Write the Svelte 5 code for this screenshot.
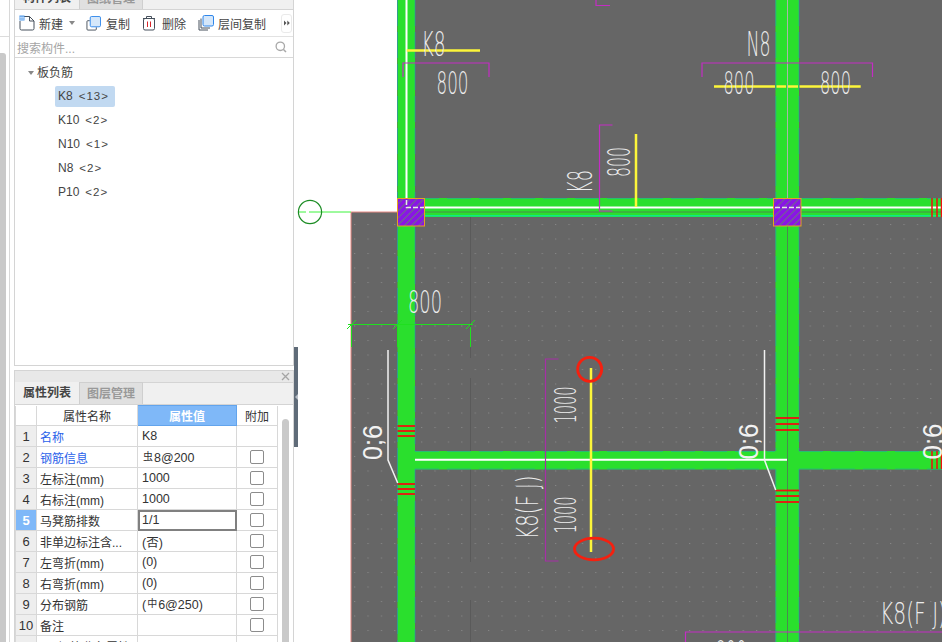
<script>
  const items = [
    { name: 'K8', count: '<13>', active: true },
    { name: 'K10', count: '<2>' },
    { name: 'N10', count: '<1>' },
    { name: 'N8', count: '<2>' },
    { name: 'P10', count: '<2>' }
  ];

  const rows = [
    { name: '名称', value: 'K8', link: true, nocheck: true },
    { name: '钢筋信息', bar: '虫', value: '8@200', link: true },
    { name: '左标注(mm)', value: '1000' },
    { name: '右标注(mm)', value: '1000' },
    { name: '马凳筋排数', value: '1/1', current: true },
    { name: '非单边标注含...', value: '(否)' },
    { name: '左弯折(mm)', value: '(0)' },
    { name: '右弯折(mm)', value: '(0)' },
    { name: '分布钢筋', pre: '(', bar: '中', value: '6@250)' },
    { name: '备注', value: '' }
  ];

  // CAD labels: x,y is the baseline start, len the drawn length along the text
  const labels = [
    { t: 'K8', x: 421.5, y: 56, size: 33, len: 24 },
    { t: '800', x: 436.5, y: 94, size: 32, len: 32 },
    { t: 'N8', x: 746.5, y: 56, size: 33, len: 24 },
    { t: '800', x: 723.5, y: 94, size: 32, len: 31 },
    { t: '800', x: 820, y: 94, size: 32, len: 31 },
    { t: '800', x: 408, y: 313, size: 32, len: 34 },
    { t: 'K8', x: 592, y: 193, size: 33, len: 23, rot: -90 },
    { t: '800', x: 630, y: 177, size: 32, len: 30, rot: -90 },
    { t: '1000', x: 576, y: 423.5, size: 31, len: 37, rot: -90 },
    { t: '1000', x: 576, y: 533.5, size: 31, len: 37, rot: -90 },
    { t: 'K8(F J)', x: 538, y: 539.5, size: 31, len: 64, rot: -90 },
    { t: '0;6', x: 382, y: 460, size: 28, len: 35, rot: -90, bold: true },
    { t: '0;6', x: 758, y: 459.5, size: 28, len: 36, rot: -90, bold: true },
    { t: '0;6', x: 942, y: 459.5, size: 28, len: 36, rot: -90, bold: true },
    { t: 'K8(F J)', x: 880, y: 623.5, size: 30, len: 66 },
    { t: '800', x: 715.5, y: 663, size: 32, len: 31 }
  ];

  const magenta = [
    'M596 0V5.5H610',
    'M403 77V63H489V77',
    'M612.5 125H599.5V211H612.5',
    'M702 77V63H872.5V77',
    'M685.5 642V632H942'
  ];

  const redBars = [426, 431, 436, 484, 489, 494];
  const redBars2 = [418, 424, 430, 490.5, 496, 502];
</script>

<div class="app">
  <div class="rail">
    <div class="rail-inner">
      <div class="rail-top"></div>
      <div class="rail-thumb"></div>
    </div>
  </div>

  <div class="panels">
    <section class="panel list">
      <div class="tabs clipped">
        <span class="tab on">构件列表</span>
        <span class="tab">图纸管理</span>
      </div>

      <div class="toolbar">
        <span class="tool new">
          <svg width="16" height="16" viewBox="0 0 16 16">
            <path d="M5 1.5H10.5L15 6V13.5Q15 15 13.5 15H2.5Q1 15 1 13.5V6" fill="#fff" stroke="#46505c" />
            <path d="M10.5 1.5V6H15" fill="none" stroke="#46505c" />
            <rect x="0.5" y="0.5" width="5" height="5" fill="#3f8fe8" />
            <path d="M0.5 2.5H5.5M0.5 4H5.5M2 .5V5.5M4 .5V5.5" stroke="#cfe4fb" stroke-width=".7" />
          </svg>
          新建
          <i class="caret"></i>
        </span>
        <span class="tool copy">
          <svg width="15" height="15" viewBox="0 0 16 16">
            <path d="M4 5H2Q1 5 1 6V14Q1 15 2 15H10Q11 15 11 14V12" fill="none" stroke="#46505c" />
            <rect x="4.5" y="0.5" width="11" height="11" rx="1.5" fill="#d5e7fa" stroke="#2f86ea" />
          </svg>
          复制
        </span>
        <span class="tool del">
          <svg width="14" height="16" viewBox="0 0 14 16">
            <path d="M1 3.5H13M4.5 3.5V1.5H9.5V3.5" fill="none" stroke="#46505c" />
            <rect x="1.5" y="3.5" width="11" height="11.5" rx="1.5" fill="none" stroke="#46505c" />
            <path d="M5.5 6.5V12M8.5 6.5V12" stroke="#d8262c" />
          </svg>
          删除
        </span>
        <span class="tool layer">
          <svg width="16" height="16" viewBox="0 0 16 16">
            <path d="M1 5V15H10M3 3.5V13H12" fill="none" stroke="#46505c" />
            <rect x="5" y="0.5" width="10.5" height="10.5" rx="1.5" fill="#d5e7fa" stroke="#2f86ea" />
          </svg>
          层间复制
        </span>
        <span class="more">
          <svg width="6" height="6" viewBox="0 0 6 6"><path d="M0 0.5L2.5 3L0 5.500ZM3.300 0.5L5.800 3L3.300 5.500Z" fill="#555" /></svg>
        </span>
      </div>

      <div class="search">
        <span>搜索构件...</span>
        <svg width="12" height="12" viewBox="0 0 12 12">
          <circle cx="5.300" cy="5.300" r="4.200" fill="none" stroke="#a8a8a8" stroke-width="1.300" />
          <path d="M8.500 8.500L11 11" stroke="#a8a8a8" stroke-width="1.500" />
        </svg>
      </div>

      <div class="tree">
        <div class="group"><i class="caret"></i>板负筋</div>
        {#each items as item}
          <div class="leaf">
            <span class:active={item.active}>{item.name}<em>{item.count}</em></span>
          </div>
        {/each}
      </div>
    </section>

    <section class="panel props">
      <div class="titlebar">
        <svg width="9" height="9" viewBox="0 0 9 9"><path d="M1 1L8 8M8 1L1 8" stroke="#a5a5a5" stroke-width="1.300" /></svg>
      </div>
      <div class="tabs short">
        <span class="tab on">属性列表</span>
        <span class="tab">图层管理</span>
      </div>
      <div class="grid-wrap">
        <table>
          <thead>
            <tr>
              <th class="idx plain"></th>
              <th class="col-name">属性名称</th>
              <th class="col-val">属性值</th>
              <th class="col-add">附加</th>
            </tr>
          </thead>
          <tbody>
            {#each rows as row, i}
              <tr>
                <td class="idx" class:hot={row.current}>{i + 1}</td>
                <td class:link={row.link}>{row.name}</td>
                <td class="val" class:editing={row.current}>
                  {#if row.pre}{row.pre}{/if}{#if row.bar}<span class="bar">{row.bar}</span>{/if}{row.value}
                </td>
                <td class="chk">
                  {#if !row.nocheck}<span class="box"></span>{/if}
                </td>
              </tr>
            {/each}
            <tr>
              <td class="idx"></td>
              <td><span class="box small"></span>钢筋业务属性</td>
              <td></td>
              <td></td>
            </tr>
          </tbody>
        </table>
        <div class="vscroll"><div class="vthumb"></div></div>
      </div>
    </section>
  </div>

  <div class="canvas">
    <svg class="drawing" width="648" height="642" viewBox="294 0 648 642">
      <defs>
        <pattern id="dots" width="13.4" height="14.500" patternUnits="userSpaceOnUse" x="354" y="224">
          <rect x="0" y="0" width="1.200" height="1" fill="#868686" />
        </pattern>
        <pattern id="hatch" width="5" height="5" patternUnits="userSpaceOnUse" patternTransform="rotate(-45)">
          <rect width="5" height="5" fill="#8a14e6" />
          <rect width="5" height="1.100" fill="#6f6a8a" />
        </pattern>
      </defs>

      <rect x="294" y="0" width="648" height="642" fill="#fff" />
      <path d="M397 0H942V642H351V212H397Z" fill="#666" />
      <rect x="351" y="217" width="591" height="425" fill="url(#dots)" />
      <path d="M351 642V212H397" fill="none" stroke="#e98a84" />
      <path d="M470.500 217V358M470.500 378V562M470.500 600V642" stroke="#5a5a5a" />

      <!-- walls -->
      <rect x="397.500" y="0" width="17.500" height="642" fill="#2adf2d" />
      <rect x="775.500" y="0" width="23.500" height="642" fill="#2adf2d" />
      <rect x="415" y="198" width="527" height="19" fill="#2adf2d" />
      <rect x="415" y="451" width="527" height="18.500" fill="#2adf2d" />
      <path d="M415 215.800H942" stroke="#12e58a" stroke-width="1.500" />
      <path d="M415 198.500H942M415 451.500H775M799 451.500H942M415 469H775M799 469H942" stroke="#1f9ac0" stroke-width=".8" stroke-opacity=".6" stroke-dasharray="24 8" />
      <path d="M397.500 0V642M415 0V198M415 226V451M415 469V642M775.800 0V451M799 0V451M775.800 469V642M799 469V642" stroke="#1f9ac0" stroke-width=".8" stroke-opacity=".7" stroke-dasharray="26 6" />
      <path d="M415 212H942" stroke="#4a8a50" />
      <path d="M787.500 226V642" stroke="#4a8a50" />
      <path d="M787.500 0V198" stroke="#aab4aa" />
      <path d="M406.500 0V198M415 207.500H942M415 459.800H787" stroke="#fff" stroke-width="2" />

      <!-- reinforcement marks -->
      {#each redBars as y}
        <path d="M397.500 {y}H415" stroke="#f01010" stroke-width="1.800" />
      {/each}
      {#each redBars2 as y}
        <path d="M775.500 {y}H799" stroke="#f01010" stroke-width="1.800" />
      {/each}
      <path d="M932 198V217M937 198V217M941.500 198V217M932 451V469M937 451V469M941.500 451V469" stroke="#f01010" stroke-width="1.500" />

      <!-- columns -->
      <rect x="397.500" y="198.500" width="27" height="27.500" fill="url(#hatch)" stroke="#e8a020" />
      <rect x="773.500" y="198.500" width="27.500" height="27.500" fill="url(#hatch)" stroke="#e8a020" />
      <path d="M406.500 200V207.500H424" fill="none" stroke="#e8e8e8" stroke-width="1.500" stroke-dasharray="5 2" />
      <path d="M775 207.500H800" stroke="#e8e8e8" stroke-width="1.500" stroke-dasharray="5 2" />

      <!-- axis -->
      <path d="M298 212H351" stroke="#3cf43c" stroke-dasharray="8 3 60 0" />
      <circle cx="310" cy="212" r="11.600" fill="none" stroke="#1c8c24" stroke-width="1.200" />

      <!-- dimension -->
      <g stroke="#1fe01f" fill="none">
        <path d="M348 324.500H473" />
        <path d="M347 329L356 320M393 329L402 320M466 329L475 320" />
        <path d="M351.500 325V347M397.500 325V347M470.500 327V347" />
      </g>

      <!-- leaders -->
      <path d="M388 350V460L397.700 483M764.500 350V460L775.700 490" fill="none" stroke="#f2f2f2" stroke-width="1.500" />

      <!-- magenta brackets -->
      {#each magenta as d}
        <path {d} fill="none" stroke="#c42cc4" stroke-width="1.200" />
      {/each}
      <path d="M558.500 359H545.500V561H558.500" fill="none" stroke="#a62fa6" stroke-width="1.200" />

      <!-- yellow bars -->
      <path d="M406.700 50.500H480M636 134V207M591 368V552" stroke="#fdf63a" stroke-width="2.500" fill="none" />
      <path d="M714 86.500H775M776.500 86.500H786M788 86.500H798M799.500 86.500H860.700" stroke="#fdf63a" stroke-width="2.500" />

      {#each labels as l}
        <text
          class="cad"
          class:solid={l.bold}
          transform="translate({l.x} {l.y}) rotate({l.rot || 0})"
          font-size={l.size}
          textLength={l.len}
          lengthAdjust="spacingAndGlyphs">{l.t}</text>
      {/each}

      <!-- red markers -->
      <circle cx="589.700" cy="369.300" r="12" fill="none" stroke="#f5200f" stroke-width="2.800" />
      <ellipse cx="594" cy="549" rx="19.500" ry="10.800" fill="none" stroke="#f5200f" stroke-width="2.800" />
    </svg>

    <div class="splitter"><i></i></div>
  </div>
</div>

<style>
  :global(body) {
    margin: 0;
    background: #fff;
  }

  .app {
    display: flex;
    width: 942px;
    height: 642px;
    overflow: hidden;
    font-family: "Liberation Sans", "Noto Sans CJK SC", sans-serif;
    font-size: 12px;
    color: #333;
  }

  .rail {
    width: 14px;
    flex: none;
    background: #fff;
  }

  .rail-inner {
    display: flex;
    flex-direction: column;
    width: 9px;
    height: 100%;
    border-right: 1px solid #d8d8d8;
  }

  .rail-top {
    height: 36px;
    border-bottom: 1px solid #dcdcdc;
  }

  .rail-thumb {
    flex: 1;
    width: 6px;
    margin-top: 16px;
    background: #c9c9c9;
    border-top-right-radius: 3px;
  }

  .panels {
    width: 280px;
    flex: none;
    display: flex;
    flex-direction: column;
    gap: 4px;
  }

  .panel {
    border: 1px solid #d4d4d4;
    border-top: 0;
    background: #fff;
    display: flex;
    flex-direction: column;
  }

  .list {
    height: 365px;
    flex: none;
  }

  .props {
    flex: 1;
    min-height: 0;
    border-bottom: 0;
    border-top: 1px solid #d4d4d4;
  }

  .tabs {
    display: flex;
    flex: none;
    height: 22px;
    background: #f0f0f0;
    border-bottom: 1px solid #d4d4d4;
    align-items: flex-end;
  }

  .tabs.short {
    height: 21px;
  }

  .tabs.clipped {
    height: 9px;
    overflow: hidden;
  }

  .tab {
    flex: none;
    width: 64px;
    height: 22px;
    line-height: 22px;
    box-sizing: border-box;
    text-align: center;
    background: #e0e0e0;
    border: 1px solid #cfcfcf;
    border-bottom: 0;
    color: #999;
    font-weight: bold;
  }

  .tab.on {
    background: #f0f0f0;
    color: #444;
    border: 0;
  }

  .toolbar {
    display: flex;
    align-items: center;
    flex: none;
    height: 27px;
    position: relative;
    border-bottom: 1px solid #e2e2e2;
    box-sizing: border-box;
  }

  .tool {
    display: flex;
    align-items: center;
    gap: 5px;
    flex: none;
    color: #444;
  }

  .new { margin-left: 4px; gap: 4px; }
  .copy { margin-left: 11px; }
  .del { margin-left: 12px; gap: 6px; }
  .layer { margin-left: 12px; gap: 4px; }

  .caret {
    display: inline-block;
    width: 0;
    height: 0;
    border: 3px solid transparent;
    border-top: 4px solid #888;
    border-bottom: 0;
    margin-left: 2px;
  }

  .more {
    margin-left: auto;
    margin-right: 1px;
    width: 11px;
    height: 19px;
    display: flex;
    align-items: center;
    justify-content: center;
    border: 1px solid #eaeaea;
    box-sizing: border-box;
    border-radius: 3px;
  }

  .search {
    display: flex;
    align-items: center;
    justify-content: space-between;
    flex: none;
    height: 20px;
    padding: 0 6px 0 2px;
    border-bottom: 1px solid #d8d8d8;
    color: #a5a5a5;
  }

  .tree {
    flex: 1;
    padding-top: 4px;
  }

  .group {
    height: 22px;
    line-height: 22px;
    padding-left: 13px;
    color: #444;
  }

  .group .caret {
    margin: 0 3px 2px 0;
    vertical-align: middle;
  }

  .leaf {
    height: 24px;
    display: flex;
    align-items: center;
    padding-left: 40px;
    color: #444;
  }

  .leaf span {
    display: block;
    height: 21px;
    line-height: 21px;
    padding: 0 6px 0 3px;
    border-radius: 2px;
  }

  .leaf span.active {
    background: #c1d9f1;
  }

  .leaf em {
    font-style: normal;
    font-size: 11.5px;
    margin-left: 6px;
    letter-spacing: 1px;
  }

  .titlebar {
    flex: none;
    height: 11px;
    display: flex;
    align-items: center;
    justify-content: flex-end;
    padding-right: 3px;
    background: #e8e8e8;
    border-bottom: 1px solid #d4d4d4;
  }

  .grid-wrap {
    flex: 1;
    min-height: 0;
    display: flex;
    overflow: hidden;
  }

  table {
    table-layout: fixed;
    width: 262px;
    height: fit-content;
    flex: none;
    border-collapse: collapse;
    color: #333;
  }

  th, td {
    height: 21px;
    padding: 0 3px;
    border: 1px solid #d8d8d8;
    border-top: 0;
    font-weight: normal;
    white-space: nowrap;
    overflow: hidden;
    box-sizing: border-box;
  }

  th {
    height: 20px;
    text-align: center;
  }

  .col-name { width: 101px; }
  .col-val {
    width: 99px;
    background: #7fb8f8;
    color: #fff;
    font-weight: bold;
    border: 1px solid #62a4ec;
  }
  .col-add { width: 41px; }

  .idx {
    width: 21px;
    padding: 0;
    text-align: center;
    background: #eee;
    font-size: 13px;
  }

  .idx.plain {
    background: #fff;
  }

  .idx.hot {
    background: #7fb8f8;
    color: #fff;
    font-weight: bold;
  }

  .link {
    color: #2a62ea;
  }

  .val {
    font-size: 12.5px;
    padding-left: 4px;
  }

  .editing {
    outline: 2px solid #808080;
    outline-offset: -2px;
  }

  .bar {
    font-size: 10px;
    position: relative;
    top: -2px;
    margin: 0 1px;
  }

  .chk {
    text-align: center;
    padding: 0;
  }

  .box {
    display: inline-block;
    width: 14px;
    height: 14px;
    box-sizing: border-box;
    border: 1px solid #8c8c8c;
    border-radius: 2px;
    vertical-align: middle;
  }

  .box.small {
    width: 12px;
    height: 12px;
    margin-right: 6px;
  }

  .vscroll {
    flex: 1;
    padding: 14px 4px 0;
  }

  .vthumb {
    height: 300px;
    background: #c9c9c9;
    border-radius: 4px 4px 0 0;
  }

  .canvas {
    flex: 1;
    position: relative;
    min-width: 0;
  }

  .drawing {
    display: block;
  }

  .cad {
    font-family: "DejaVu Sans", sans-serif;
    font-weight: 200;
    fill: #ececec;
  }

  .cad.solid {
    font-family: "Liberation Sans", sans-serif;
    font-weight: 400;
    fill: #f2f2f2;
  }

  .splitter {
    position: absolute;
    left: 0;
    top: 347px;
    width: 4px;
    height: 100px;
    background: #5f6b78;
  }

  .splitter i {
    position: absolute;
    left: 1px;
    top: 47px;
    border: 3px solid transparent;
    border-right: 3px solid #b8bec6;
    border-left: 0;
  }
</style>
